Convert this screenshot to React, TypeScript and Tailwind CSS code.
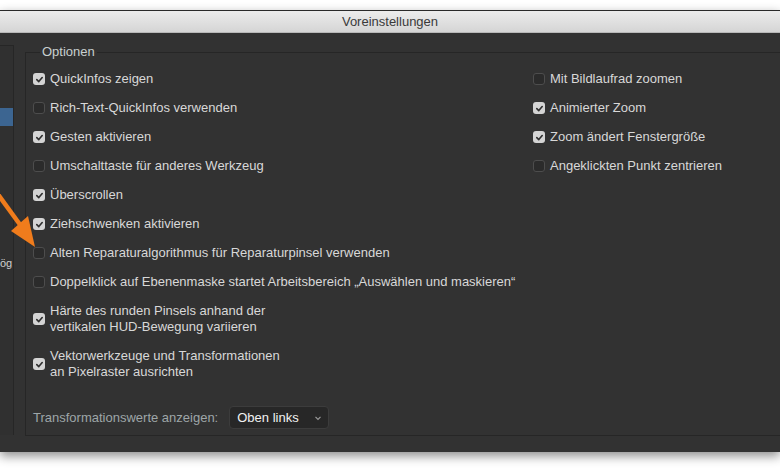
import React from "react";

type Option = { label: string[]; checked: boolean };

const leftOptions: Option[] = [
  { label: ["QuickInfos zeigen"], checked: true },
  { label: ["Rich-Text-QuickInfos verwenden"], checked: false },
  { label: ["Gesten aktivieren"], checked: true },
  { label: ["Umschalttaste für anderes Werkzeug"], checked: false },
  { label: ["Überscrollen"], checked: true },
  { label: ["Ziehschwenken aktivieren"], checked: true },
  { label: ["Alten Reparaturalgorithmus für Reparaturpinsel verwenden"], checked: false },
  { label: ["Doppelklick auf Ebenenmaske startet Arbeitsbereich „Auswählen und maskieren“"], checked: false },
  { label: ["Härte des runden Pinsels anhand der", "vertikalen HUD-Bewegung variieren"], checked: true },
  { label: ["Vektorwerkzeuge und Transformationen", "an Pixelraster ausrichten"], checked: true },
];

const rightOptions: Option[] = [
  { label: ["Mit Bildlaufrad zoomen"], checked: false },
  { label: ["Animierter Zoom"], checked: true },
  { label: ["Zoom ändert Fenstergröße"], checked: true },
  { label: ["Angeklickten Punkt zentrieren"], checked: false },
];

function Checkbox({ checked }: { checked: boolean }) {
  if (checked) {
    return (
      <span className="flex h-[12px] w-[12px] shrink-0 items-center justify-center rounded-[3px] bg-[#d4d4d4]">
        <svg width="9" height="9" viewBox="0 0 10 10">
          <path d="M2 5.2 L4.2 7.3 L8 2.8" fill="none" stroke="#2e2e2e" strokeWidth="1.8" strokeLinecap="round" strokeLinejoin="round" />
        </svg>
      </span>
    );
  }
  return <span className="h-[12px] w-[12px] shrink-0 rounded-[3px] border border-[#4d4d4d] bg-[#2b2b2b]" />;
}

function OptionRow({ option }: { option: Option }) {
  return (
    <div className="flex items-center gap-[5px]">
      <Checkbox checked={option.checked} />
      <div className="flex flex-col">
        {option.label.map((line, i) => (
          <span key={i} className="whitespace-nowrap leading-[16px]">
            {line}
          </span>
        ))}
      </div>
    </div>
  );
}

export default function App() {
  return (
    <div
      className="relative h-[470px] w-[780px] overflow-hidden bg-white text-[13px] text-[#d8d8d8]"
      style={{ fontFamily: '"Liberation Sans", Arial, sans-serif' }}
    >
      <div className="pt-[10px]">
        <div className="border-t border-[#2a2a2a] shadow-[0_4px_10px_rgba(0,0,0,0.45)]">
          <div className="flex h-[22px] items-center justify-center border-b border-[#b8b8b8] bg-gradient-to-b from-[#ececec] to-[#d5d5d5] text-[13px] text-[#3a3a3a]">
            Voreinstellungen
          </div>
          <div className="flex h-[419px] overflow-hidden bg-[#323232]">
            {/* Seitenleiste */}
            <div className="mb-[17px] mt-[12px] flex w-[14px] shrink-0 flex-col border-r border-t border-[#262626] bg-[#303030]">
              <div className="mt-[62px] h-[18px] bg-[#3c6591]" />
              <div className="mt-[130px] whitespace-nowrap text-[11px] leading-[14px] text-[#d0d0d0]">
                ög
              </div>
            </div>

            {/* Optionen */}
            <fieldset className="-mr-[20px] mb-[16px] ml-[11px] mt-[11px] flex-1 border border-[#262626] pl-[7px]">
              <legend className="ml-[7px] px-[2px] text-[13px] leading-[16px] text-[#c8d0d0]">Optionen</legend>
              <div className="mt-[11px] flex">
                <div className="flex w-[500px] shrink-0 flex-col gap-[13px]">
                  {leftOptions.map((o, i) => (
                    <OptionRow key={i} option={o} />
                  ))}
                </div>
                <div className="flex flex-col gap-[13px]">
                  {rightOptions.map((o, i) => (
                    <OptionRow key={i} option={o} />
                  ))}
                </div>
              </div>
              <div className="mt-[26px] flex items-center gap-[11px]">
                <span className="text-[#9ea6a8]">Transformationswerte anzeigen:</span>
                <div className="flex h-[23px] w-[100px] items-center justify-between rounded-[4px] border border-[#3c3c3c] bg-[#272727] pl-[7px] pr-[6px] text-[#f2f2f2]">
                  <span>Oben links</span>
                  <svg width="8" height="6" viewBox="0 0 8 6">
                    <path d="M1.5 1.8 L4 4.3 L6.5 1.8" fill="none" stroke="#9a9a9a" strokeWidth="1.2" />
                  </svg>
                </div>
              </div>
            </fieldset>
          </div>
        </div>
      </div>

      {/* Hinweispfeil */}
      <svg className="absolute left-0 top-[180px]" width="50" height="80" viewBox="0 180 50 80">
        <line x1="-3" y1="193" x2="21" y2="226" stroke="#f07c1c" strokeWidth="4.5" />
        <polygon points="11,231 35,247 28,216" fill="#f07c1c" />
      </svg>
    </div>
  );
}
